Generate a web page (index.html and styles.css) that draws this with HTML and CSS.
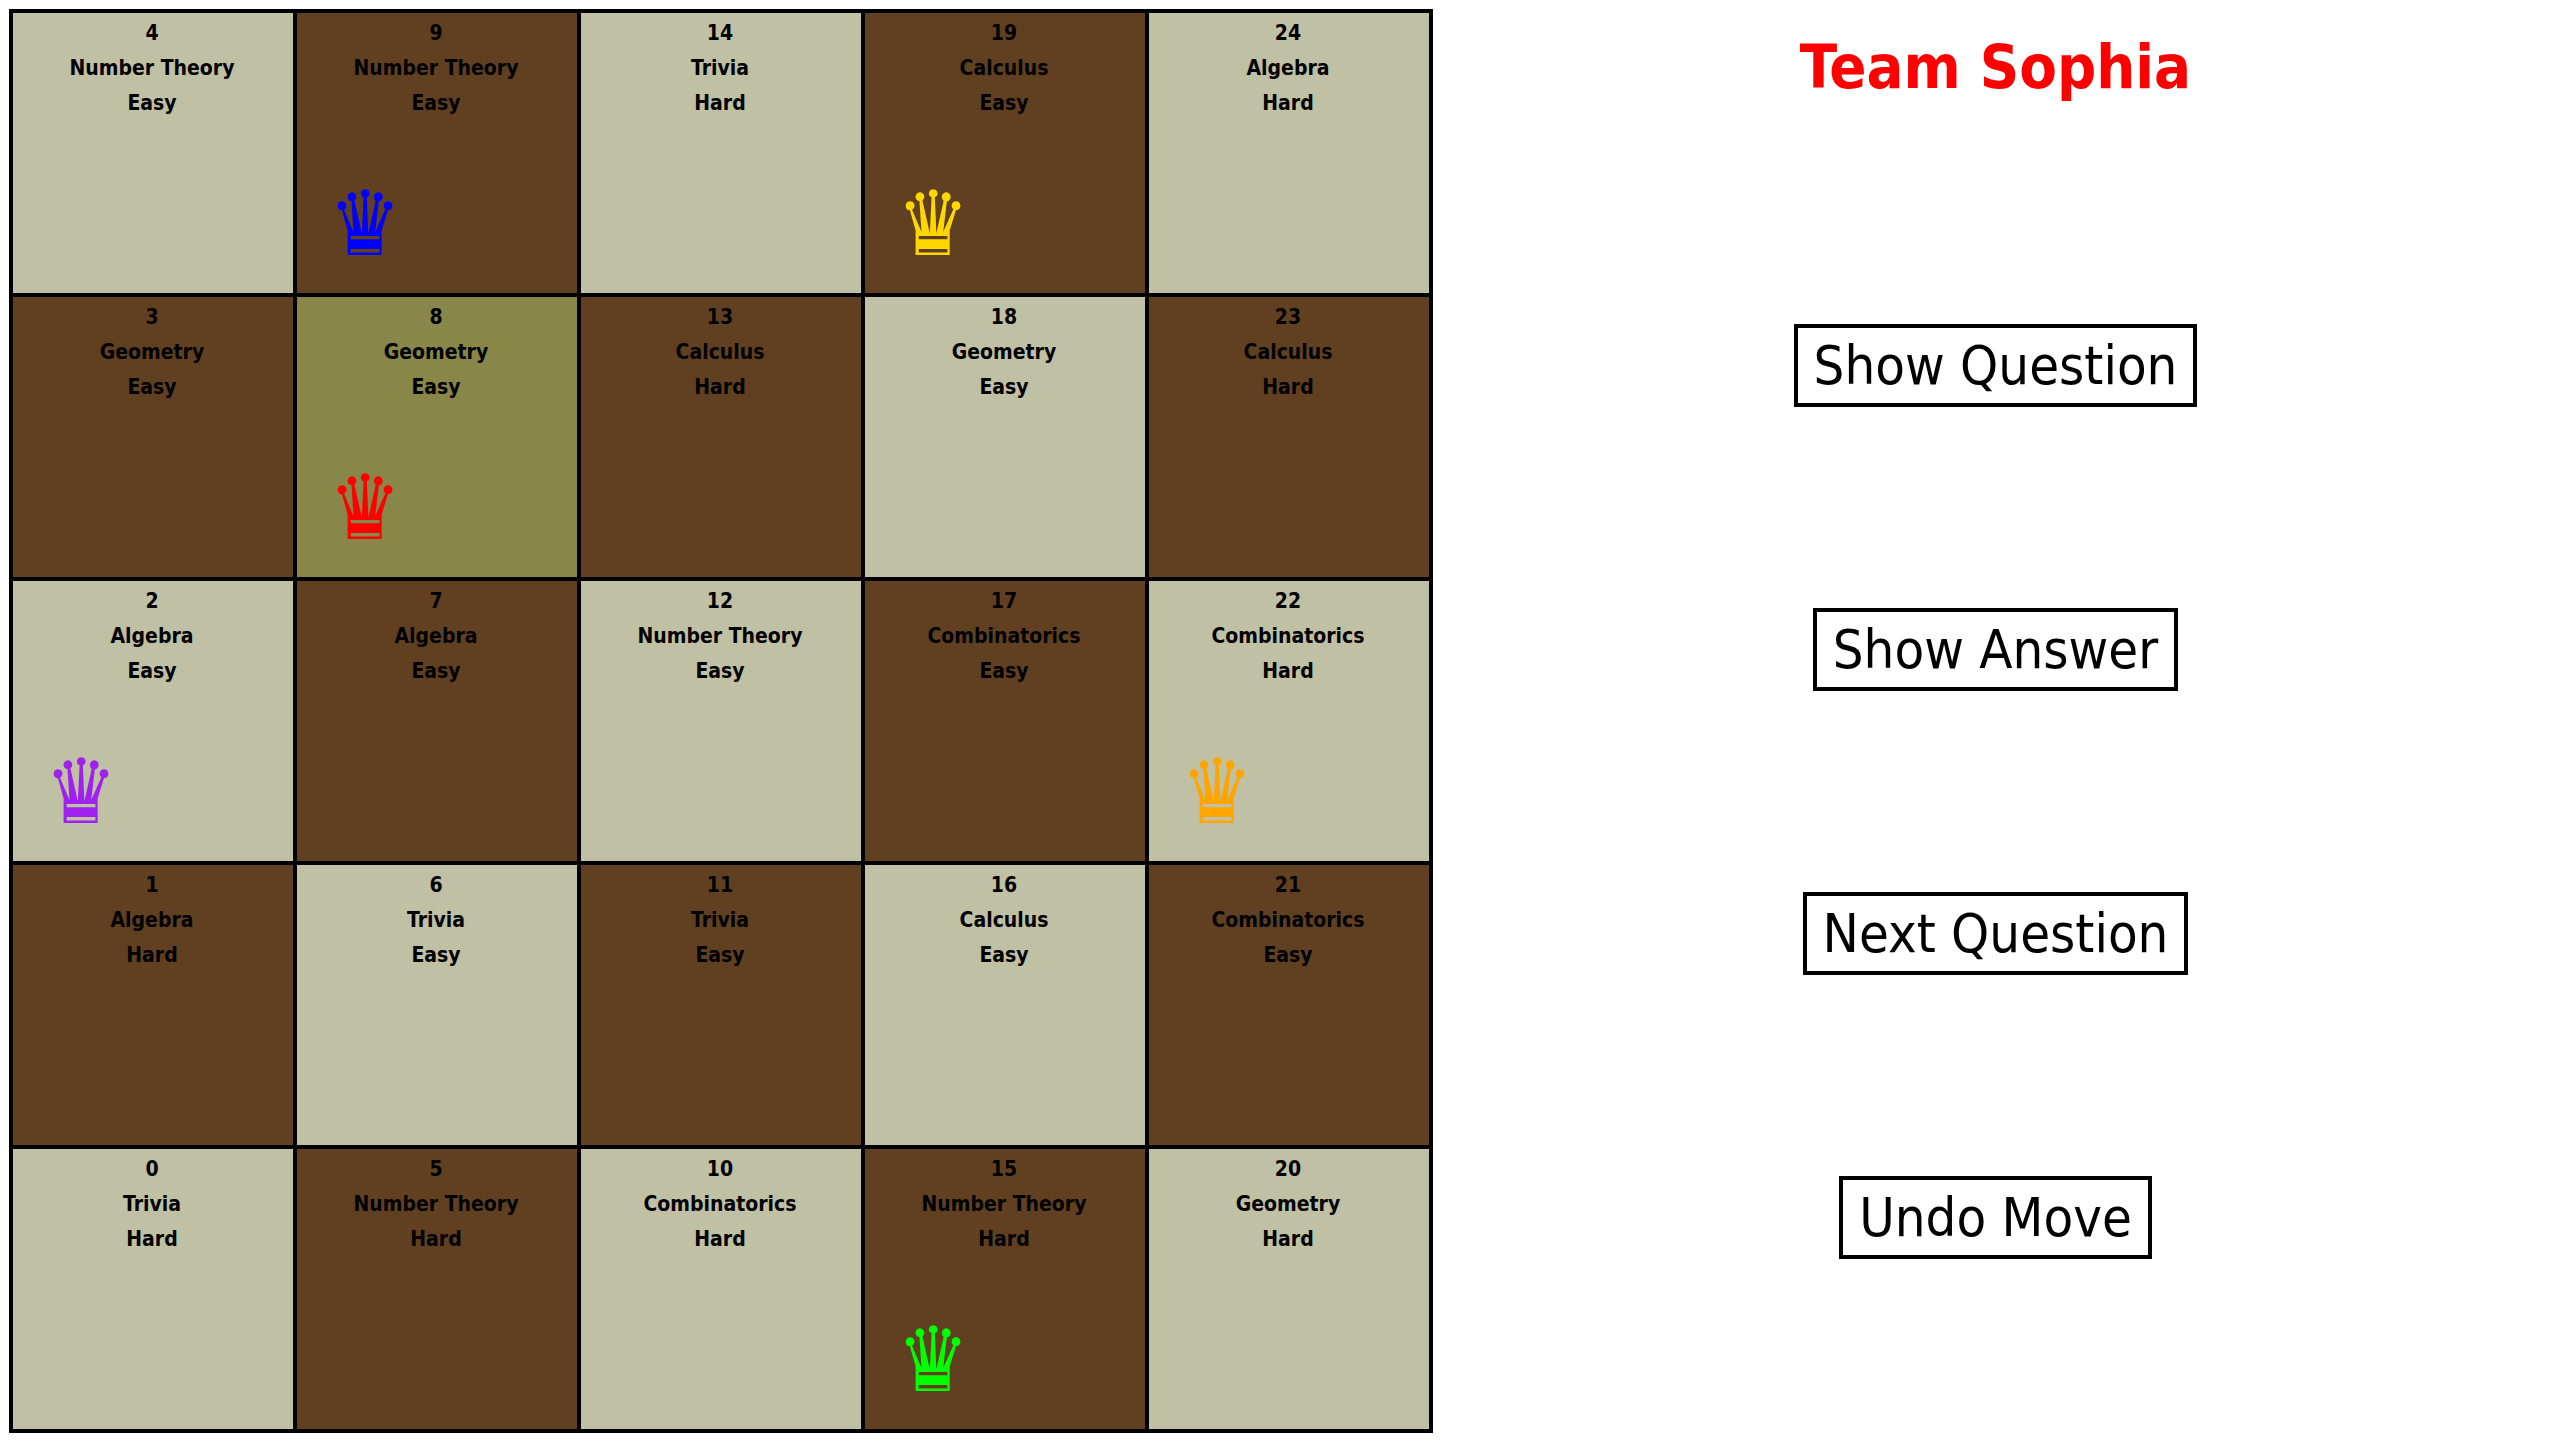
FILE: index.html
```html
<!DOCTYPE html>
<html lang="en">
<head>
<meta charset="utf-8">
<title>Team Sophia</title>
<link rel="stylesheet" href="styles.css">
</head>
<body>
<main class="game">
  <section class="board" aria-label="Board">
    <div class="cell light">4<br>Number Theory<br>Easy</div>
    <div class="cell dark">9<br>Number Theory<br>Easy<span class="queen blue">♛</span></div>
    <div class="cell light">14<br>Trivia<br>Hard</div>
    <div class="cell dark">19<br>Calculus<br>Easy<span class="queen gold">♛</span></div>
    <div class="cell light">24<br>Algebra<br>Hard</div>

    <div class="cell dark">3<br>Geometry<br>Easy</div>
    <div class="cell active">8<br>Geometry<br>Easy<span class="queen red">♛</span></div>
    <div class="cell dark">13<br>Calculus<br>Hard</div>
    <div class="cell light">18<br>Geometry<br>Easy</div>
    <div class="cell dark">23<br>Calculus<br>Hard</div>

    <div class="cell light">2<br>Algebra<br>Easy<span class="queen purple">♛</span></div>
    <div class="cell dark">7<br>Algebra<br>Easy</div>
    <div class="cell light">12<br>Number Theory<br>Easy</div>
    <div class="cell dark">17<br>Combinatorics<br>Easy</div>
    <div class="cell light">22<br>Combinatorics<br>Hard<span class="queen orange">♛</span></div>

    <div class="cell dark">1<br>Algebra<br>Hard</div>
    <div class="cell light">6<br>Trivia<br>Easy</div>
    <div class="cell dark">11<br>Trivia<br>Easy</div>
    <div class="cell light">16<br>Calculus<br>Easy</div>
    <div class="cell dark">21<br>Combinatorics<br>Easy</div>

    <div class="cell light">0<br>Trivia<br>Hard</div>
    <div class="cell dark">5<br>Number Theory<br>Hard</div>
    <div class="cell light">10<br>Combinatorics<br>Hard</div>
    <div class="cell dark">15<br>Number Theory<br>Hard<span class="queen lime">♛</span></div>
    <div class="cell light">20<br>Geometry<br>Hard</div>
  </section>
  <section class="panel">
    <div class="slot"><h1 class="team">Team Sophia</h1></div>
    <div class="slot"><button class="action" type="button">Show Question</button></div>
    <div class="slot"><button class="action" type="button">Show Answer</button></div>
    <div class="slot"><button class="action" type="button">Next Question</button></div>
    <div class="slot"><button class="action" type="button">Undo Move</button></div>
  </section>
</main>
</body>
</html>
```
FILE: styles.css
```css
* {
  box-sizing: border-box;
}

body {
  margin: 0;
  background: #fff;
  color: #000;
  font-family: "DejaVu Sans Condensed", "DejaVu Sans", sans-serif;
}

.game {
  display: flex;
  min-height: 100vh;
  padding: 9px 2px 7px 9px;
}

.board {
  display: grid;
  flex: none;
  grid-template-columns: repeat(5, 1fr);
  grid-template-rows: repeat(5, 1fr);
  gap: 4px;
  width: calc(100vh - 16px);
  aspect-ratio: 1;
  padding: 4px;
  background: #000;
}

.cell {
  display: flow-root;
  padding: 3px 2px 0 0;
  font-size: 21px;
  font-weight: bold;
  line-height: 35px;
  text-align: center;
}

.light {
  background: #c0c0a5;
}

.dark {
  background: #604020;
}

.active {
  background: #888648;
}

.queen {
  display: block;
  width: 136px;
  margin-top: 53px;
  font-size: 90px;
  font-weight: normal;
  line-height: 100px;
}

.blue { color: #00f; }
.gold { color: gold; }
.red { color: red; }
.purple { color: #a020f0; }
.orange { color: orange; }
.lime { color: lime; }

.panel {
  display: grid;
  flex: 1;
  grid-template-rows: repeat(5, 1fr);
  padding-bottom: 4px;
}

.slot {
  padding-top: 31px;
  text-align: center;
}

.team {
  margin: 0;
  color: red;
  font-size: 61px;
  line-height: 54px;
}

.action {
  height: 83px;
  padding: 0 16px;
  border: 4px solid #000;
  border-radius: 0;
  background: #fff;
  color: #000;
  font-family: inherit;
  font-size: 54px;
  line-height: 62px;
}
```
